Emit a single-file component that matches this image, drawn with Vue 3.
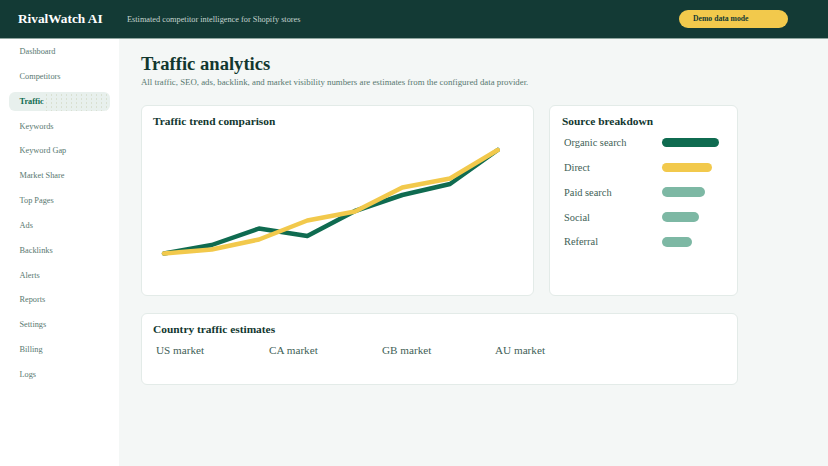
<script setup>
const navItems = ['Dashboard', 'Competitors', 'Traffic', 'Keywords', 'Keyword Gap', 'Market Share', 'Top Pages', 'Ads', 'Backlinks', 'Alerts', 'Reports', 'Settings', 'Billing', 'Logs']

const sources = [
  { name: 'Organic search', width: 57, color: '#0f6b50' },
  { name: 'Direct', width: 50, color: '#f2c94c' },
  { name: 'Paid search', width: 43.5, color: '#7db8a4' },
  { name: 'Social', width: 37, color: '#7db8a4' },
  { name: 'Referral', width: 30, color: '#7db8a4' },
]

const markets = ['US market', 'CA market', 'GB market', 'AU market']

const greenLine = '22,118.5 69.7,110 117,93.5 165.3,101 213,76 260.3,60 308,49 355.7,15'
const yellowLine = '22,118.5 69.7,114.5 117,104.5 165.3,85.5 213,76.5 260.3,52.5 308,43.5 355.7,15'
</script>

<template>
  <div class="app">
    <header class="topbar">
      <div class="brand">RivalWatch AI</div>
      <div class="tagline">Estimated competitor intelligence for Shopify stores</div>
      <div class="badge">Demo data mode</div>
    </header>

    <div class="body">
      <nav class="sidebar">
        <a v-for="item in navItems" :key="item" class="nav-item" :class="{ active: item === 'Traffic' }">{{ item }}</a>
      </nav>

      <main class="content">
        <h1>Traffic analytics</h1>
        <p class="subtitle">All traffic, SEO, ads, backlink, and market visibility numbers are estimates from the configured data provider.</p>

        <div class="grid">
          <section class="card trend">
            <h2>Traffic trend comparison</h2>
            <svg class="chart" width="391" height="150" viewBox="0 0 391 150">
              <polyline :points="greenLine" fill="none" stroke="#0f6b50" stroke-width="4.5" stroke-linejoin="round" stroke-linecap="round" />
              <polyline :points="yellowLine" fill="none" stroke="#f2c94c" stroke-width="4.5" stroke-linejoin="round" stroke-linecap="round" />
            </svg>
          </section>

          <section class="card breakdown">
            <h2>Source breakdown</h2>
            <div v-for="source in sources" :key="source.name" class="source-row">
              <span class="source-name">{{ source.name }}</span>
              <span class="source-bar" :style="{ width: source.width + 'px', background: source.color }"></span>
            </div>
          </section>
        </div>

        <section class="card countries">
          <h2>Country traffic estimates</h2>
          <div class="markets">
            <span v-for="market in markets" :key="market" class="market">{{ market }}</span>
          </div>
        </section>
      </main>
    </div>
  </div>
</template>

<style>
html,
body {
  margin: 0;
  background: #f4f7f6;
}
</style>

<style scoped>
.app {
  width: 828px;
  height: 466px;
  overflow: hidden;
  font-family: "Liberation Serif", serif;
  color: #12372f;
}

.topbar {
  height: 38px;
  display: flex;
  align-items: center;
  padding: 0 40px 0 18px;
  background: #133a35;
  border-bottom: 1px solid #8fa6a0;
}

.brand {
  width: 109px;
  font-size: 13.3px;
  font-weight: 700;
  color: #fff;
  white-space: nowrap;
}

.tagline {
  flex: 1;
  font-size: 8.3px;
  color: #c4d4cf;
}

.badge {
  width: 95px;
  height: 18px;
  line-height: 18px;
  padding-left: 14px;
  border-radius: 9px;
  background: #f2c94c;
  color: #133a35;
  font-size: 7.7px;
  font-weight: 700;
}

.body {
  display: flex;
  height: 427px;
}

.sidebar {
  width: 119px;
  flex: none;
  padding: 3px 9px 0;
  box-sizing: border-box;
  background: #fff;
}

.nav-item {
  display: block;
  height: 19px;
  line-height: 19px;
  margin-bottom: 5.85px;
  padding-left: 10.5px;
  border-radius: 6px;
  font-size: 8.3px;
  color: #587870;
}

.nav-item.active {
  background-color: #e8f0ed;
  background-image:
    linear-gradient(to right, #e8f0ed 34px, transparent 34px),
    radial-gradient(circle, rgba(190, 195, 160, 0.35) 0.5px, transparent 0.7px);
  background-size: auto, 5px 4px;
  background-position: 0 0, 0 1px;
  color: #0f6b50;
  font-weight: 700;
}

.content {
  flex: 1;
  padding: 13px 90px 0 22px;
}

h1 {
  margin: 0;
  font-size: 18.6px;
  line-height: 23px;
  font-weight: 700;
  color: #12372f;
}

.subtitle {
  margin: 1px 0 0;
  font-size: 8.8px;
  line-height: 12px;
  color: #587870;
}

.grid {
  display: grid;
  grid-template-columns: 393px 189px;
  gap: 15px;
  margin-top: 17px;
}

.card {
  box-sizing: border-box;
  background: #fff;
  border: 1px solid #e3ebe8;
  border-radius: 6px;
}

.trend,
.breakdown {
  height: 191px;
  padding: 9px 11px;
}

.breakdown {
  padding-left: 12px;
}

h2 {
  margin: 0;
  font-size: 11.4px;
  line-height: 13px;
  font-weight: 700;
  color: #12372f;
}

.chart {
  display: block;
  margin: 7px 0 0 -11px;
}

.source-row {
  display: flex;
  align-items: center;
  height: 19px;
  margin-top: 5.85px;
  padding-left: 2px;
}

.source-row:first-of-type {
  margin-top: 5px;
}

.source-name {
  width: 97.5px;
  font-size: 10.4px;
  color: #3f5f57;
}

.source-bar {
  height: 9.5px;
  border-radius: 5px;
}

.countries {
  height: 72px;
  margin-top: 17px;
  padding: 9px 11px;
}

.markets {
  display: flex;
  margin-top: 5px;
  padding-left: 3px;
}

.market {
  width: 113px;
  font-size: 11.2px;
  line-height: 18px;
  color: #3f5f57;
}
</style>
